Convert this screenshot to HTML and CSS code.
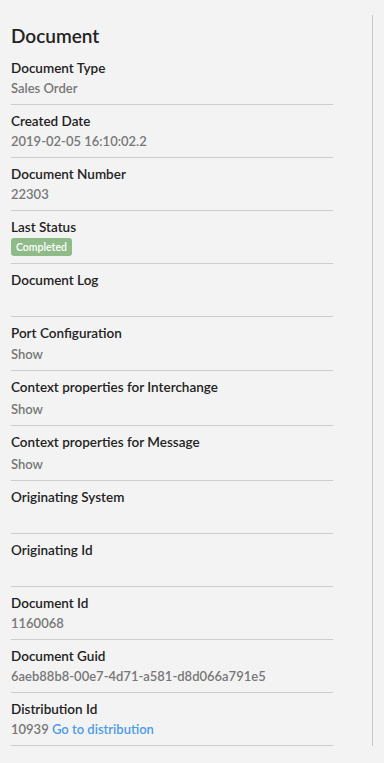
FILE: index.html
```html
<!DOCTYPE html>
<html lang="en">
<head>
    <meta charset="UTF-8">
    <meta name="viewport" content="width=device-width, initial-scale=1.0">
    <title>Document</title>
    <link rel="stylesheet" href="styles.css">
</head>
<body>
    <div class="sidebar">
        <div class="doc-panel">
            <h2 class="doc-title">Document</h2>
            <div class="doc-row">
                <div class="doc-label">Document Type</div>
                <div class="doc-value">Sales Order</div>
            </div>
            <div class="doc-row">
                <div class="doc-label">Created Date</div>
                <div class="doc-value">2019-02-05 16:10:02.2</div>
            </div>
            <div class="doc-row">
                <div class="doc-label">Document Number</div>
                <div class="doc-value">22303</div>
            </div>
            <div class="doc-row">
                <div class="doc-label">Last Status</div>
                <div class="doc-value"><span class="badge">Completed</span></div>
            </div>
            <div class="doc-row">
                <div class="doc-label">Document Log</div>
                <div class="doc-value"></div>
            </div>
            <div class="doc-row">
                <div class="doc-label">Port Configuration</div>
                <div class="doc-value show first">Show</div>
            </div>
            <div class="doc-row">
                <div class="doc-label">Context properties for Interchange</div>
                <div class="doc-value show">Show</div>
            </div>
            <div class="doc-row">
                <div class="doc-label">Context properties for Message</div>
                <div class="doc-value show">Show</div>
            </div>
            <div class="doc-row">
                <div class="doc-label">Originating System</div>
                <div class="doc-value"></div>
            </div>
            <div class="doc-row">
                <div class="doc-label">Originating Id</div>
                <div class="doc-value"></div>
            </div>
            <div class="doc-row">
                <div class="doc-label">Document Id</div>
                <div class="doc-value">1160068</div>
            </div>
            <div class="doc-row">
                <div class="doc-label">Document Guid</div>
                <div class="doc-value">6aeb88b8-00e7-4d71-a581-d8d066a791e5</div>
            </div>
            <div class="doc-row">
                <div class="doc-label">Distribution Id</div>
                <div class="doc-value">10939 <a href="#" class="link">Go to distribution</a></div>
            </div>
        </div>
    </div>
</body>
</html>
```

FILE: styles.css
```css
body {
    font-family: Lato, "Open Sans", sans-serif;
    margin: 0;
    padding: 0;
    background-color: #f3f3f3;
    color: #222;
}
.sidebar {
    width: 372px;
    margin-top: 15px;
    border-right: 1px solid #c8c8c8;
}
.doc-panel {
    width: 322px;
    padding-left: 11px;
}
.doc-title {
    margin: 0 0 4px 0;
    padding-top: 9px;
    font-size: 19px;
    line-height: 24px;
    font-weight: 600;
    color: #222;
}
.doc-row {
    padding: 6px 0 6px 0;
    border-bottom: 1px solid #cdcdcd;
}
.doc-label {
    font-size: 13.5px;
    line-height: 20px;
    font-weight: 600;
    color: #222;
}
.doc-value {
    font-size: 13px;
    line-height: 21px;
    height: 20px;
    font-weight: 600;
    color: #777;
}
.doc-value.show {
    height: 22px;
    line-height: 24px;
}
.doc-value.show.first {
    height: 21px;
    line-height: 23px;
}
.badge {
    display: inline-block;
    background-color: #8fbb88;
    color: white;
    font-size: 10.5px;
    line-height: 18px;
    padding: 0 5px;
    border-radius: 3px;
    vertical-align: top;
    margin-top: 1px;
}
.link {
    color: #4c9be8;
    text-decoration: none;
}
```
